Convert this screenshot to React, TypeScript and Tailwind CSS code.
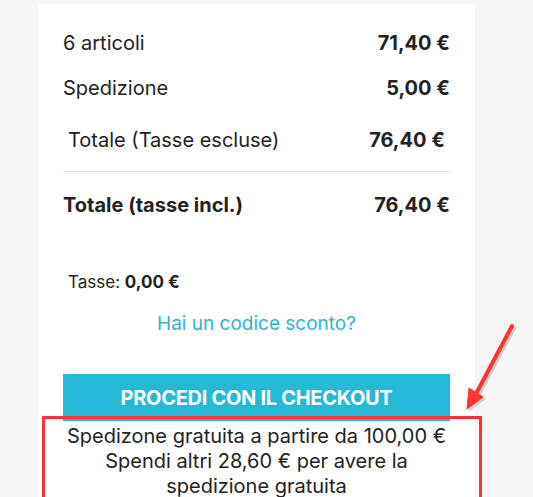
import React from "react";

const font = { fontFamily: "Inter, 'Noto Sans', sans-serif" };

function Row({ label, value, bold = false, indent = false }: { label: string; value: string; bold?: boolean; indent?: boolean }) {
  return (
    <div className={`flex items-center justify-between ${indent ? "pl-[5px] pr-[5px]" : ""}`}>
      <span className={bold ? "font-bold" : ""}>{label}</span>
      <span className="font-bold">{value}</span>
    </div>
  );
}

export default function App() {
  return (
    <div className="relative w-[533px] h-[497px] overflow-hidden bg-[#f6f6f6] pt-1 text-[#232323]" style={font}>
      <div className="ml-[38px] w-[437px] h-[600px] bg-white px-[25px] pt-[27px] text-[20px] leading-6">
        <Row label="6 articoli" value="71,40 €" />
        <div className="mt-[21px]">
          <Row label="Spedizione" value="5,00 €" />
        </div>
        <div className="mt-[28px] pb-[19px] border-b border-[#e1e1e1]">
          <Row label="Totale (Tasse escluse)" value="76,40 €" indent />
        </div>
        <div className="mt-[21px]">
          <Row label="Totale (tasse incl.)" value="76,40 €" bold />
        </div>

        <p className="mt-[55px] pl-[5px] text-[17px] leading-5">
          Tasse: <span className="font-bold">0,00 €</span>
        </p>
        <p className="mt-[20px] text-center text-[19px] text-[#2fb5d2]">Hai un codice sconto?</p>

        <button className="mt-[38px] w-full h-[47px] bg-[#25b9d7] text-white font-bold text-[20px] uppercase tracking-[-0.3px]">
          Procedi con il checkout
        </button>
        <div className="mt-[3px] text-center text-[20px] leading-[25px]">
          Spedizone gratuita a partire da 100,00 €
          <br />
          Spendi altri 28,60 € per avere la
          <br />
          spedizione gratuita
        </div>
      </div>

      {/* annotazione */}
      <div className="absolute left-[42px] top-[416px] w-[440px] h-[84px] border-[3px] border-[#ff3333]" />
      <svg className="absolute left-[455px] top-[318px]" width="70" height="100" viewBox="0 0 70 100">
        <g transform="translate(2,2)" opacity="0.25" stroke="#555" fill="#555">
          <line x1="57" y1="8" x2="22" y2="74" strokeWidth="4" strokeLinecap="round" />
          <polygon points="12,91 14,70 28,79" />
        </g>
        <g stroke="#ff3333" fill="#ff3333">
          <line x1="57" y1="8" x2="22" y2="74" strokeWidth="4" strokeLinecap="round" />
          <polygon points="12,91 14,70 28,79" strokeWidth="1" />
        </g>
      </svg>
    </div>
  );
}
